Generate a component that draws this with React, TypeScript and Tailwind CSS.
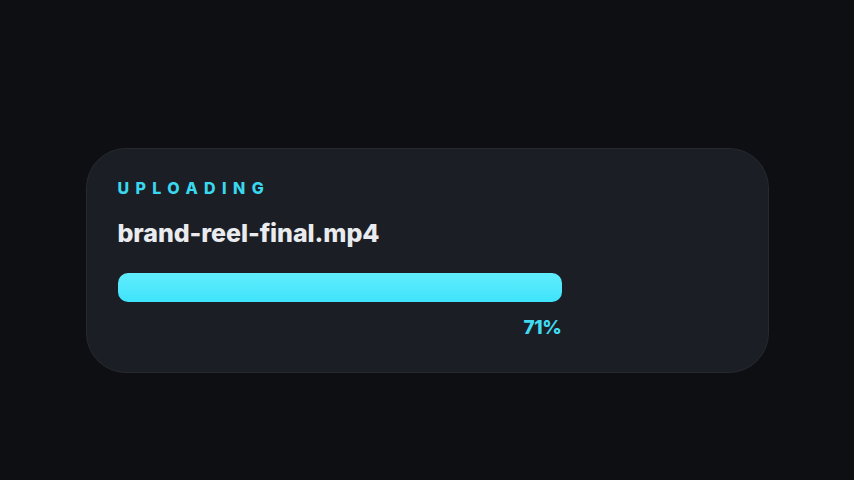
const progress = 71

const App = () => {
  return (
    <div
      className="min-h-[480px] w-full bg-[#0d0f13] flex justify-center pt-[148px]"
      style={{ fontFamily: 'Inter, "Liberation Sans", Arial, sans-serif' }}
    >
      <div className="w-[683px] h-[225px] rounded-[40px] bg-[#1b1f25] border border-[#262a30] pl-[31px] pt-[31px]">
        <div className="text-[16px] leading-[16px] font-extrabold tracking-[0.4em] text-[#3ad8ef]">
          UPLOADING
        </div>
        <div className="mt-[25px] text-[25px] leading-[25px] font-extrabold tracking-[-0.003em] text-[#e9ebef]">
          brand-reel-final.mp4
        </div>
        <div className="mt-[27px] w-[444px]">
          <div className="h-[29px] rounded-[10px] bg-gradient-to-b from-[#60edfd] to-[#3de3fb]" />
          <div className="mt-[16px] text-right text-[19px] leading-[19px] font-extrabold tracking-[-0.02em] text-[#40dbf1]">
            {progress}%
          </div>
        </div>
      </div>
    </div>
  )
}

export default App
